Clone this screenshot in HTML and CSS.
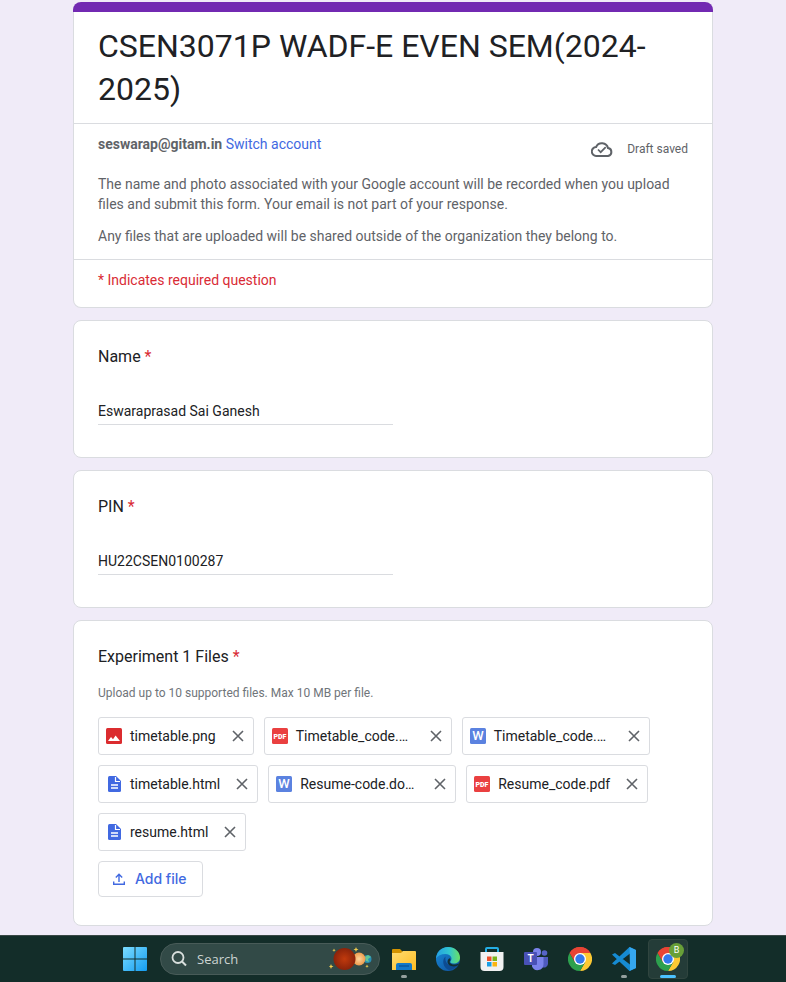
FILE: index.html
```html
<!DOCTYPE html>
<html lang="en">
<head>
<meta charset="utf-8">
<meta name="viewport" content="width=device-width, initial-scale=1">
<title>CSEN3071P WADF-E EVEN SEM(2024-2025)</title>
<link rel="stylesheet" href="styles.css">
</head>
<body>
<svg class="sprite" aria-hidden="true">
  <defs>
    <symbol id="close" viewBox="0 0 12 12"><path d="M1 1l10 10M11 1L1 11" fill="none" stroke="#5f6368" stroke-width="1.6"/></symbol>
    <symbol id="pdf" viewBox="0 0 16 16"><rect width="16" height="16" rx="1.5" fill="#ea4040"/><text x="8" y="10.6" text-anchor="middle" class="pdf-mark">PDF</text></symbol>
    <symbol id="word" viewBox="0 0 16 16"><rect width="16" height="16" rx="1.5" fill="#5b82e0"/><text x="8" y="12.4" text-anchor="middle" class="word-mark">W</text></symbol>
    <symbol id="image" viewBox="0 0 16 16"><rect width="16" height="16" rx="1.5" fill="#db2c2f"/><path d="M2 13l3-4 2 2.200 2.600-3.600L14 13z" fill="#fff"/></symbol>
    <symbol id="doc" viewBox="0 0 16 16"><path d="M3.500 0H10l5 5v9.500a1.500 1.500 0 0 1-1.500 1.500h-10A1.500 1.500 0 0 1 2 14.500v-13A1.500 1.500 0 0 1 3.500 0z" fill="#4169e1"/><path d="M9.500 1v4.500H14" fill="none" stroke="#fff" stroke-width="1.200"/><path d="M5 9h7M5 12h7" stroke="#fff" stroke-width="1.400"/></symbol>
    <symbol id="chrome" viewBox="0 0 24 24">
      <path d="M12 12L1.600 6A12 12 0 0 1 22.400 6z" fill="#e84435"/>
      <path d="M12 12V6h10.400A12 12 0 0 1 12 24l5.200-9z" fill="#fcc934"/>
      <path d="M12 12l5.200 3L12 24A12 12 0 0 1 1.600 6l5.200 9z" fill="#2da04e"/>
      <path d="M1.600 6A12 12 0 0 1 22.400 6H12L6.800 15z" fill="#e84435"/>
      <circle cx="12" cy="12" r="6" fill="#fff"/><circle cx="12" cy="12" r="4.700" fill="#3379ee"/>
    </symbol>
    <linearGradient id="win" x2="1" y2="1"><stop stop-color="#7bdcff"/><stop offset="1" stop-color="#149cf0"/></linearGradient>
    <linearGradient id="folder" x2="1" y2="1"><stop stop-color="#ffdd72"/><stop offset="1" stop-color="#ffbd22"/></linearGradient>
    <linearGradient id="edgeTop" x2="1" y2="0"><stop stop-color="#249fe3"/><stop offset=".55" stop-color="#31c6d0"/><stop offset="1" stop-color="#6be062"/></linearGradient>
    <linearGradient id="edgeLow" x2="1" y2="1"><stop stop-color="#168bd9"/><stop offset="1" stop-color="#104c98"/></linearGradient>
    <radialGradient id="mars"><stop stop-color="#c13a0d"/><stop offset="1" stop-color="#8a230a"/></radialGradient>
    <radialGradient id="sun"><stop stop-color="#ffd49b"/><stop offset="1" stop-color="#ec9a4c"/></radialGradient>
  </defs>
</svg>

<main class="form-page">
  <form class="form">
    <header class="card intro">
      <h1 class="title">CSEN3071P WADF-E EVEN SEM(2024-2025)</h1>
      <section class="account">
        <div class="account-row">
          <div><strong>seswarap@gitam.in</strong> <a class="link" href="#">Switch account</a></div>
          <div class="draft">
            <svg width="22" height="16" viewBox="0 0 22 16" aria-hidden="true"><path d="M5.500 15a4.500 4.500 0 0 1-.4-9A6.300 6.300 0 0 1 17 7.100 4 4 0 0 1 17 15z" fill="none" stroke="#5f6368" stroke-width="2"/><path d="M7 8.500l2.700 2.700 5-5" fill="none" stroke="#5f6368" stroke-width="1.700"/></svg>
            <span>Draft saved</span>
          </div>
        </div>
        <p>The name and photo associated with your Google account will be recorded when you upload files and submit this form. Your email is not part of your response.</p>
        <p>Any files that are uploaded will be shared outside of the organization they belong to.</p>
      </section>
      <p class="required-note">* Indicates required question</p>
    </header>

    <section class="card question">
      <label class="label" for="name">Name <span class="star">*</span></label>
      <input class="field" id="name" type="text" value="Eswaraprasad Sai Ganesh">
    </section>

    <section class="card question">
      <label class="label" for="pin">PIN <span class="star">*</span></label>
      <input class="field" id="pin" type="text" value="HU22CSEN0100287">
    </section>

    <section class="card files">
      <h2 class="label">Experiment 1 Files <span class="star">*</span></h2>
      <p class="hint">Upload up to 10 supported files. Max 10 MB per file.</p>
      <ul class="chips">
        <li class="chip"><svg class="type" aria-hidden="true"><use href="#image"/></svg><span class="file">timetable.png</span><button class="remove" type="button" aria-label="Remove file"><svg><use href="#close"/></svg></button></li>
        <li class="chip chip-long"><svg class="type" aria-hidden="true"><use href="#pdf"/></svg><span class="file">Timetable_code.…</span><button class="remove" type="button" aria-label="Remove file"><svg><use href="#close"/></svg></button></li>
        <li class="chip chip-long"><svg class="type" aria-hidden="true"><use href="#word"/></svg><span class="file">Timetable_code.…</span><button class="remove" type="button" aria-label="Remove file"><svg><use href="#close"/></svg></button></li>
        <li class="chip"><svg class="type" aria-hidden="true"><use href="#doc"/></svg><span class="file">timetable.html</span><button class="remove" type="button" aria-label="Remove file"><svg><use href="#close"/></svg></button></li>
        <li class="chip chip-long"><svg class="type" aria-hidden="true"><use href="#word"/></svg><span class="file">Resume-code.do…</span><button class="remove" type="button" aria-label="Remove file"><svg><use href="#close"/></svg></button></li>
        <li class="chip"><svg class="type" aria-hidden="true"><use href="#pdf"/></svg><span class="file">Resume_code.pdf</span><button class="remove" type="button" aria-label="Remove file"><svg><use href="#close"/></svg></button></li>
        <li class="chip"><svg class="type" aria-hidden="true"><use href="#doc"/></svg><span class="file">resume.html</span><button class="remove" type="button" aria-label="Remove file"><svg><use href="#close"/></svg></button></li>
      </ul>
      <button class="add" type="button">
        <svg width="12" height="12" viewBox="0 0 12 12" aria-hidden="true"><path d="M6 9V1.500M2.800 4.500L6 1.300l3.200 3.200M.7 8.500v2.800h10.600V8.500" fill="none" stroke="#4169e1" stroke-width="1.400"/></svg>
        <span>Add file</span>
      </button>
    </section>
  </form>
</main>

<nav class="taskbar" aria-label="Taskbar">
  <button class="start" type="button" aria-label="Start"><svg width="24" height="24" viewBox="0 0 24 24"><path d="M1 0h10.500v11.500H0V1a1 1 0 0 1 1-1zM12.500 0H23a1 1 0 0 1 1 1v10.500H12.500zM0 12.500h11.500V24H1a1 1 0 0 1-1-1zM12.500 12.500H24V23a1 1 0 0 1-1 1H12.500z" fill="url(#win)"/></svg></button>
  <div class="search">
    <svg width="16" height="16" viewBox="0 0 16 16" aria-hidden="true"><circle cx="7" cy="6.500" r="5.500" fill="none" stroke="#d9dfdd" stroke-width="1.800"/><path d="M11 10.500l4 4" stroke="#d9dfdd" stroke-width="2"/></svg>
    <input type="text" placeholder="Search" aria-label="Search">
    <svg width="44" height="24" viewBox="0 0 44 24" aria-hidden="true"><circle cx="38.500" cy="12" r="4" fill="#278eb5"/><path d="M36 10l3-2 3 2-3 2 1 3-3-1z" fill="#62c596"/><circle cx="30" cy="12" r="6.500" fill="url(#sun)"/><circle cx="15.500" cy="12" r="11" fill="url(#mars)"/><path d="M2 17l.7 1.800 1.800.7-1.800.7L2 22l-.7-1.800-1.300-.7 1.300-.7zM27 0l.7 1.800 1.800.7-1.800.7L27 5l-.7-1.800-1.800-.7 1.800-.7zM5 1.500l.5 1.200 1.200.5-1.200.5L5 5l-.5-1.300-1.200-.5 1.200-.5zM38 17.500l.5 1.200 1.200.5-1.200.5-.5 1.300-.5-1.300-1.200-.5 1.200-.5z" fill="#f1cd4e"/></svg>
  </div>
  <button class="app running" type="button" aria-label="File Explorer"><svg width="24" height="24" viewBox="0 0 24 24"><path d="M0 3a1 1 0 0 1 1-1h7l3 3h-1v3H0z" fill="#d39300"/><path d="M0 6h9l2-2h12a1 1 0 0 1 1 1v18H0z" fill="url(#folder)"/><path d="M4 23v-5a2 2 0 0 1 2-2h12a2 2 0 0 1 2 2v5z" fill="#1479c9"/><path d="M7 19h10" stroke="#0b589e" stroke-width="1.500"/></svg></button>
  <button class="app" type="button" aria-label="Edge"><svg width="24" height="24" viewBox="0 0 24 24"><circle cx="12" cy="12" r="12" fill="url(#edgeLow)"/><path d="M0 11.500C.5 5 5.500 0 12 0c7 0 12 5 12 10.500 0 4-3 6-6.300 6-3 0-4-1.300-3-2.500 2.200-2.800-.2-7-5.200-7C5 7 1.500 9 0 11.500z" fill="url(#edgeTop)"/><path d="M9.500 9.500c-4 3.500-2.500 11.500 3.500 13.500 4-.4 7.500-2.500 9.500-5.500-6 2.800-14.500.5-13-8z" fill="#0d4b91"/><path d="M13.500 15c1.500 3 6 3.400 10 1.200l-1 1.900c-4 2.600-11 1.200-11-3.600 0-2 1.500-3 2.500-3.200.8 1.500.3 2.600-.5 3.700z" fill="#132f32"/></svg></button>
  <button class="app" type="button" aria-label="Microsoft Store"><svg width="24" height="24" viewBox="0 0 24 24"><path d="M6 6V2a1 1 0 0 1 1-1h10a1 1 0 0 1 1 1v4" fill="none" stroke="#24aee5" stroke-width="2"/><path d="M.5 5h23v15a4 4 0 0 1-4 4h-15a4 4 0 0 1-4-4z" fill="#f1f1f1"/><path d="M7 9.500h4.500V14H7z" fill="#ee512b"/><path d="M12.500 9.500H17V14h-4.500z" fill="#79b51d"/><path d="M7 15h4.500v4.500H7z" fill="#199ee5"/><path d="M12.500 15H17v4.500h-4.500z" fill="#fbb510"/></svg></button>
  <button class="app" type="button" aria-label="Teams"><svg width="24" height="24" viewBox="0 0 24 24"><circle cx="20.500" cy="6" r="2.800" fill="#5664c8"/><path d="M16 10h8v7a4 4 0 0 1-6 3z" fill="#4f5abf"/><circle cx="13" cy="5" r="4" fill="#7b83eb"/><path d="M8 10h11.500v7.500a6 6 0 0 1-11.500 2z" fill="#7b83eb"/><rect y="5" width="13" height="13" rx="1" fill="#4951b5"/><text x="6.500" y="15" text-anchor="middle" class="teams-mark">T</text></svg></button>
  <button class="app" type="button" aria-label="Chrome"><svg width="24" height="24"><use href="#chrome"/></svg></button>
  <button class="app running" type="button" aria-label="Visual Studio Code"><svg width="24" height="24" viewBox="0 0 24 24"><path d="M17.500 0L24 3v18l-6.500 3-16-15L0 7.500 3 6l15 11.500V6.500L3 18l-3-1.500L1.500 15z" fill="#168bd2"/><path d="M17.500 0L24 3v18l-6.500 3 .5-2z" fill="#35a7ef"/></svg></button>
  <button class="app active" type="button" aria-label="Chrome, profile B"><svg width="24" height="24"><use href="#chrome"/></svg><span class="profile">B</span></button>
</nav>
</body>
</html>
```
FILE: styles.css
```css
* { box-sizing: border-box; }

body {
  margin: 0;
  min-height: 100vh;
  display: flex;
  flex-direction: column;
  background: #f0ebf8;
  color: #202124;
  font: 14px/20px Roboto, sans-serif;
}

h1, h2, p, ul { margin: 0; padding: 0; font-weight: 400; }
button { padding: 0; border: 0; background: none; font: inherit; }
svg { display: block; flex: none; }
.sprite { position: absolute; width: 0; height: 0; }

.form-page { flex: 1; padding: 2px 16px 9px; }
.form {
  max-width: 640px;
  margin: 0 auto;
  display: flex;
  flex-direction: column;
  gap: 12px;
}
.card {
  background: #fff;
  border: 1px solid #dadce0;
  border-radius: 8px;
}

.intro { position: relative; border-top: 0; color: #5f6368; }
.intro::before {
  content: "";
  position: absolute;
  inset: 0 -1px auto;
  height: 10px;
  border-radius: 8px 8px 0 0;
  background: #7229b2;
}
.title {
  padding: 23px 24px 12px;
  color: #202124;
  font-size: 32px;
  line-height: 43px;
}
.account {
  display: flex;
  flex-direction: column;
  gap: 12px;
  padding: 10px 24px 13px;
  border: solid #dadce0;
  border-width: 1px 0;
}
.account-row { display: flex; justify-content: space-between; height: 28px; }
.link { color: #4169e1; text-decoration: none; }
.draft {
  display: flex;
  align-items: center;
  gap: 14px;
  height: 30px;
  font-size: 12px;
}
.required-note { padding: 10px 24px 17px; color: #d92b35; }

.question, .files { padding: 24px; }
.label { display: block; font-size: 16px; line-height: 24px; }
.star { color: #d92b35; }
.field {
  display: block;
  width: 50%;
  height: 28px;
  margin: 28px 0 8px;
  padding: 0;
  border: 0;
  border-bottom: 1px solid #dadce0;
  background: none;
  color: #202124;
  font: inherit;
}

.files { padding-bottom: 28px; }
.hint { margin: 14px 0; color: #70757a; font-size: 12px; }
.chips {
  display: flex;
  flex-wrap: wrap;
  gap: 10px;
  list-style: none;
}
.chip {
  display: flex;
  align-items: center;
  height: 38px;
  padding: 0 9px 0 7px;
  border: 1px solid #dadce0;
  border-radius: 3px;
}
.chip-long { width: 188px; }
.type { width: 16px; height: 16px; margin-right: 8px; }
.file { flex: 1; white-space: nowrap; }
.remove { margin-left: 16px; }
.remove svg { width: 12px; height: 12px; }
.pdf-mark { fill: #fff; font: 900 7px Roboto, sans-serif; }
.word-mark { fill: #fff; font: 500 13px Roboto, sans-serif; }
.add {
  display: flex;
  align-items: center;
  gap: 10px;
  height: 36px;
  margin-top: 10px;
  padding: 0 15px 0 14px;
  border: 1px solid #dadce0;
  border-radius: 4px;
  color: #4169e1;
  font: 500 14px/20px Inter, sans-serif;
}

.taskbar {
  display: flex;
  align-items: center;
  justify-content: center;
  gap: 4px;
  height: 47px;
  padding-left: 25px;
  border-top: 1px solid #394846;
  background: #132d29;
}
.start { margin-right: 9px; }
.search {
  display: flex;
  align-items: center;
  gap: 10px;
  width: 220px;
  height: 32px;
  padding: 0 6px 0 10px;
  border: 1px solid #485b58;
  border-radius: 16px;
  background: #324a47;
}
.search input {
  flex: 1;
  min-width: 0;
  padding: 0;
  border: 0;
  background: none;
  font: 13px/20px "Open Sans", sans-serif;
}
.search input::placeholder { color: #ccd4d2; opacity: 1; }
.app {
  position: relative;
  display: flex;
  align-items: center;
  justify-content: center;
  width: 40px;
  height: 40px;
  border-radius: 4px;
}
.running::after, .active::after {
  content: "";
  position: absolute;
  bottom: 1px;
  width: 6px;
  height: 3px;
  border-radius: 2px;
  background: #94a09e;
}
.active { background: #243c38; border: 1px solid #30453f; }
.active::after { bottom: 0; width: 16px; background: #4cc2ff; }
.teams-mark { fill: #fff; font: 700 10px Roboto, sans-serif; }
.profile {
  position: absolute;
  top: 3px;
  right: 3px;
  width: 15px;
  height: 15px;
  border-radius: 50%;
  background: #689f38;
  color: #fff;
  font-size: 9px;
  line-height: 15px;
}
```
